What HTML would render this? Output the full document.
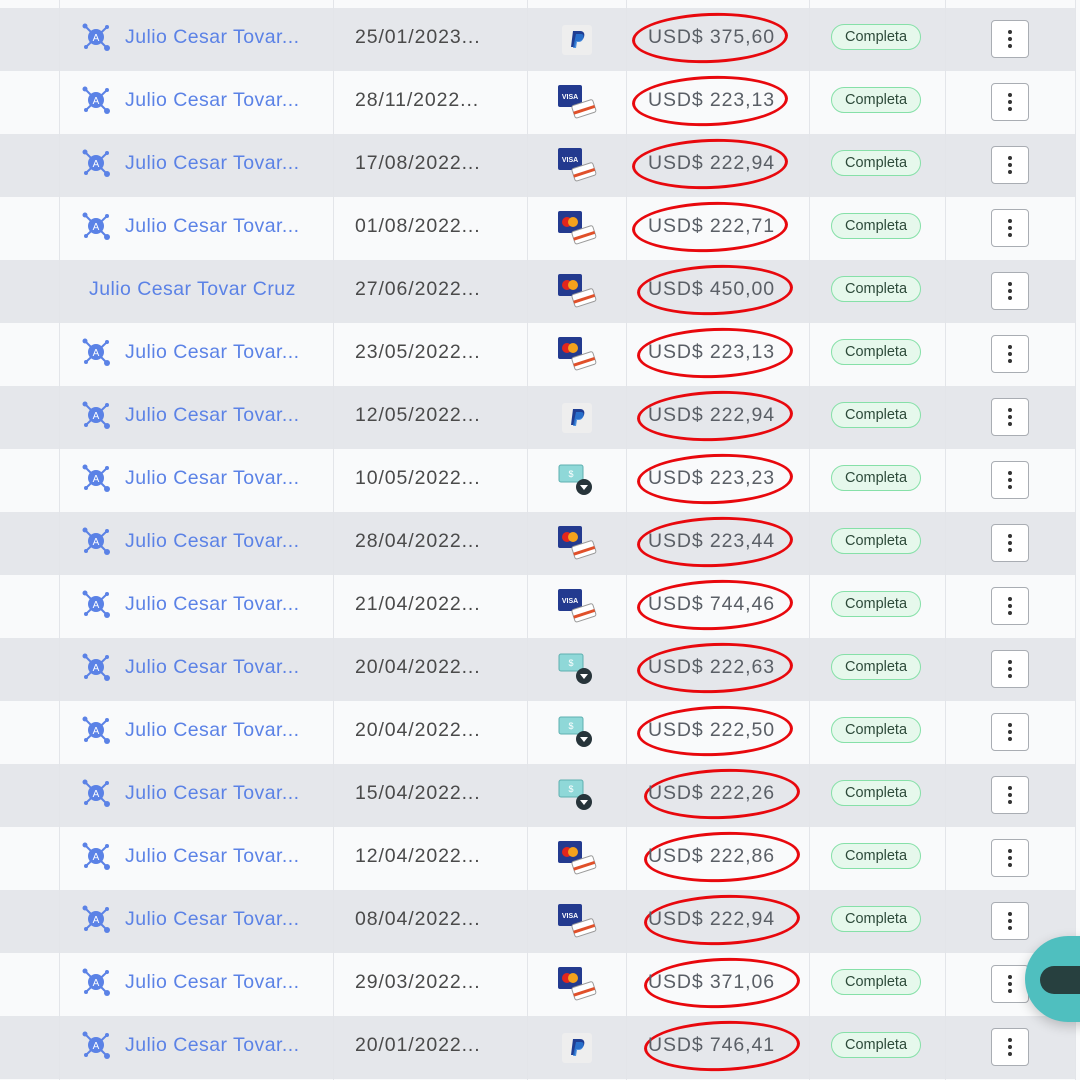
<!DOCTYPE html><html><head><meta charset="utf-8"><style>
body{margin:0;width:1080px;height:1080px;overflow:hidden;background:#f9fafb;font-family:"Liberation Sans",sans-serif;position:relative}
.r{position:absolute;left:0;width:1075px;height:63px}
.g{background:#e5e7eb}.w{background:#f9fafb}
.v{position:absolute;top:0;width:1px;height:1080px;background:#e3e5e9;z-index:1}
.n{position:absolute;left:125px;top:18px;font-size:19.5px;color:#5b82e6;letter-spacing:.45px}
.ni{position:absolute;left:81px;top:14px}
.d{position:absolute;left:355px;top:18px;font-size:19.5px;color:#4a4a4a;letter-spacing:.9px}
.p{position:absolute;left:558px;top:14px}
.a{position:absolute;left:648px;top:18px;font-size:19.5px;color:#5a5f66;z-index:3;letter-spacing:.9px}
.e{position:absolute;top:5px;width:150px;height:44px;border:3px solid #e8080d;border-radius:50%;transform:rotate(-2deg);z-index:2}
.b{position:absolute;left:831px;top:16px;width:88px;height:24px;border:1.5px solid #86e0a8;background:#e6f8ec;border-radius:13px;font-size:14.5px;color:#2d4a3a;text-align:center;line-height:24px}
.k{position:absolute;left:991px;top:12px;width:36px;height:36px;border:1.5px solid #a9adb3;background:#fff;border-radius:4px}
.k i{position:absolute;left:16px;width:4px;height:4px;border-radius:2px;background:#333}
</style></head><body>
<svg width="0" height="0" style="position:absolute"><defs>
<symbol id="ni" viewBox="0 0 30 30"><g stroke="#5b82e6" stroke-width="2"><line x1="4" y1="4" x2="26" y2="26"/><line x1="26" y1="5" x2="6" y2="24"/></g><circle cx="15" cy="15" r="8" fill="#5b82e6"/><circle cx="4" cy="4" r="2.5" fill="#5b82e6"/><circle cx="26" cy="5" r="2" fill="#5b82e6"/><circle cx="5" cy="25" r="2" fill="#5b82e6"/><circle cx="26" cy="26" r="3" fill="#5b82e6"/><text x="15" y="19" font-size="10" fill="#fff" text-anchor="middle" font-family="Liberation Sans">A</text></symbol>
<symbol id="pp" viewBox="0 0 34 34"><rect x="3" y="3" width="30" height="30" rx="3" fill="#eeeeee"/><path d="M14 9h7c4 0 5 3 4 6s-3 4-6 4h-2l-1 6h-4z" fill="#1f3d92"/><path d="M17 12h5c3 0 3 3 2 5s-2 3-5 3h-1l-1 6h-3z" fill="#2a7ad8" opacity=".8"/></symbol>
<symbol id="vi" viewBox="0 0 40 36"><rect x="0" y="0" width="24" height="22" rx="2" fill="#233a8f"/><text x="12" y="14" font-size="7" fill="#fff" text-anchor="middle" font-weight="bold" font-family="Liberation Sans">VISA</text><g transform="rotate(-18 27 24)"><rect x="15" y="17" width="22" height="13" rx="2" fill="#fff" stroke="#999"/><rect x="15" y="23" width="22" height="3" fill="#e0502a"/></g></symbol>
<symbol id="mc" viewBox="0 0 40 36"><rect x="0" y="0" width="24" height="22" rx="2" fill="#233a8f"/><circle cx="9" cy="11" r="5" fill="#e3261c"/><circle cx="15" cy="11" r="5" fill="#f4a21c"/><g transform="rotate(-18 27 24)"><rect x="15" y="17" width="22" height="13" rx="2" fill="#fff" stroke="#999"/><rect x="15" y="23" width="22" height="3" fill="#e0502a"/></g></symbol>
<symbol id="ca" viewBox="0 0 40 36"><rect x="1" y="2" width="24" height="17" rx="2" fill="#8fd8d8" stroke="#5fb0b0"/><text x="13" y="14" font-size="9" fill="#fff" text-anchor="middle" font-family="Liberation Sans">$</text><circle cx="26" cy="24" r="8" fill="#27343a"/><path d="M22 22h8l-4 5z" fill="#fff"/></symbol>
</defs></svg>
<div class="v" style="left:59px"></div><div class="v" style="left:333px"></div><div class="v" style="left:527px"></div><div class="v" style="left:626px"></div><div class="v" style="left:809px"></div><div class="v" style="left:945px"></div><div class="v" style="left:1075px"></div>

<div class="r g" style="top:8px"><svg class="ni" width="30" height="30"><use href="#ni"/></svg><div class="n">Julio Cesar Tovar...</div><div class="d">25/01/2023...</div><svg class="p" width="36" height="34"><use href="#pp"/></svg><div class="e" style="left:632px"></div><div class="a">USD$ 375,60</div><div class="b">Completa</div><div class="k"><i style="top:9px"></i><i style="top:16px"></i><i style="top:23px"></i></div></div>
<div class="r w" style="top:71px"><svg class="ni" width="30" height="30"><use href="#ni"/></svg><div class="n">Julio Cesar Tovar...</div><div class="d">28/11/2022...</div><svg class="p" width="40" height="36"><use href="#vi"/></svg><div class="e" style="left:632px"></div><div class="a">USD$ 223,13</div><div class="b">Completa</div><div class="k"><i style="top:9px"></i><i style="top:16px"></i><i style="top:23px"></i></div></div>
<div class="r g" style="top:134px"><svg class="ni" width="30" height="30"><use href="#ni"/></svg><div class="n">Julio Cesar Tovar...</div><div class="d">17/08/2022...</div><svg class="p" width="40" height="36"><use href="#vi"/></svg><div class="e" style="left:632px"></div><div class="a">USD$ 222,94</div><div class="b">Completa</div><div class="k"><i style="top:9px"></i><i style="top:16px"></i><i style="top:23px"></i></div></div>
<div class="r w" style="top:197px"><svg class="ni" width="30" height="30"><use href="#ni"/></svg><div class="n">Julio Cesar Tovar...</div><div class="d">01/08/2022...</div><svg class="p" width="40" height="36"><use href="#mc"/></svg><div class="e" style="left:632px"></div><div class="a">USD$ 222,71</div><div class="b">Completa</div><div class="k"><i style="top:9px"></i><i style="top:16px"></i><i style="top:23px"></i></div></div>
<div class="r g" style="top:260px"><div class="n" style="left:89px">Julio Cesar Tovar Cruz</div><div class="d">27/06/2022...</div><svg class="p" width="40" height="36"><use href="#mc"/></svg><div class="e" style="left:637px"></div><div class="a">USD$ 450,00</div><div class="b">Completa</div><div class="k"><i style="top:9px"></i><i style="top:16px"></i><i style="top:23px"></i></div></div>
<div class="r w" style="top:323px"><svg class="ni" width="30" height="30"><use href="#ni"/></svg><div class="n">Julio Cesar Tovar...</div><div class="d">23/05/2022...</div><svg class="p" width="40" height="36"><use href="#mc"/></svg><div class="e" style="left:637px"></div><div class="a">USD$ 223,13</div><div class="b">Completa</div><div class="k"><i style="top:9px"></i><i style="top:16px"></i><i style="top:23px"></i></div></div>
<div class="r g" style="top:386px"><svg class="ni" width="30" height="30"><use href="#ni"/></svg><div class="n">Julio Cesar Tovar...</div><div class="d">12/05/2022...</div><svg class="p" width="36" height="34"><use href="#pp"/></svg><div class="e" style="left:637px"></div><div class="a">USD$ 222,94</div><div class="b">Completa</div><div class="k"><i style="top:9px"></i><i style="top:16px"></i><i style="top:23px"></i></div></div>
<div class="r w" style="top:449px"><svg class="ni" width="30" height="30"><use href="#ni"/></svg><div class="n">Julio Cesar Tovar...</div><div class="d">10/05/2022...</div><svg class="p" width="40" height="36"><use href="#ca"/></svg><div class="e" style="left:637px"></div><div class="a">USD$ 223,23</div><div class="b">Completa</div><div class="k"><i style="top:9px"></i><i style="top:16px"></i><i style="top:23px"></i></div></div>
<div class="r g" style="top:512px"><svg class="ni" width="30" height="30"><use href="#ni"/></svg><div class="n">Julio Cesar Tovar...</div><div class="d">28/04/2022...</div><svg class="p" width="40" height="36"><use href="#mc"/></svg><div class="e" style="left:637px"></div><div class="a">USD$ 223,44</div><div class="b">Completa</div><div class="k"><i style="top:9px"></i><i style="top:16px"></i><i style="top:23px"></i></div></div>
<div class="r w" style="top:575px"><svg class="ni" width="30" height="30"><use href="#ni"/></svg><div class="n">Julio Cesar Tovar...</div><div class="d">21/04/2022...</div><svg class="p" width="40" height="36"><use href="#vi"/></svg><div class="e" style="left:637px"></div><div class="a">USD$ 744,46</div><div class="b">Completa</div><div class="k"><i style="top:9px"></i><i style="top:16px"></i><i style="top:23px"></i></div></div>
<div class="r g" style="top:638px"><svg class="ni" width="30" height="30"><use href="#ni"/></svg><div class="n">Julio Cesar Tovar...</div><div class="d">20/04/2022...</div><svg class="p" width="40" height="36"><use href="#ca"/></svg><div class="e" style="left:637px"></div><div class="a">USD$ 222,63</div><div class="b">Completa</div><div class="k"><i style="top:9px"></i><i style="top:16px"></i><i style="top:23px"></i></div></div>
<div class="r w" style="top:701px"><svg class="ni" width="30" height="30"><use href="#ni"/></svg><div class="n">Julio Cesar Tovar...</div><div class="d">20/04/2022...</div><svg class="p" width="40" height="36"><use href="#ca"/></svg><div class="e" style="left:637px"></div><div class="a">USD$ 222,50</div><div class="b">Completa</div><div class="k"><i style="top:9px"></i><i style="top:16px"></i><i style="top:23px"></i></div></div>
<div class="r g" style="top:764px"><svg class="ni" width="30" height="30"><use href="#ni"/></svg><div class="n">Julio Cesar Tovar...</div><div class="d">15/04/2022...</div><svg class="p" width="40" height="36"><use href="#ca"/></svg><div class="e" style="left:644px"></div><div class="a">USD$ 222,26</div><div class="b">Completa</div><div class="k"><i style="top:9px"></i><i style="top:16px"></i><i style="top:23px"></i></div></div>
<div class="r w" style="top:827px"><svg class="ni" width="30" height="30"><use href="#ni"/></svg><div class="n">Julio Cesar Tovar...</div><div class="d">12/04/2022...</div><svg class="p" width="40" height="36"><use href="#mc"/></svg><div class="e" style="left:644px"></div><div class="a">USD$ 222,86</div><div class="b">Completa</div><div class="k"><i style="top:9px"></i><i style="top:16px"></i><i style="top:23px"></i></div></div>
<div class="r g" style="top:890px"><svg class="ni" width="30" height="30"><use href="#ni"/></svg><div class="n">Julio Cesar Tovar...</div><div class="d">08/04/2022...</div><svg class="p" width="40" height="36"><use href="#vi"/></svg><div class="e" style="left:644px"></div><div class="a">USD$ 222,94</div><div class="b">Completa</div><div class="k"><i style="top:9px"></i><i style="top:16px"></i><i style="top:23px"></i></div></div>
<div class="r w" style="top:953px"><svg class="ni" width="30" height="30"><use href="#ni"/></svg><div class="n">Julio Cesar Tovar...</div><div class="d">29/03/2022...</div><svg class="p" width="40" height="36"><use href="#mc"/></svg><div class="e" style="left:644px"></div><div class="a">USD$ 371,06</div><div class="b">Completa</div><div class="k"><i style="top:9px"></i><i style="top:16px"></i><i style="top:23px"></i></div></div>
<div class="r g" style="top:1016px"><svg class="ni" width="30" height="30"><use href="#ni"/></svg><div class="n">Julio Cesar Tovar...</div><div class="d">20/01/2022...</div><svg class="p" width="36" height="34"><use href="#pp"/></svg><div class="e" style="left:644px"></div><div class="a">USD$ 746,41</div><div class="b">Completa</div><div class="k"><i style="top:9px"></i><i style="top:16px"></i><i style="top:23px"></i></div></div>

<div style="position:absolute;left:1025px;top:936px;width:100px;height:86px;border-radius:43px;background:#4fbfbf;z-index:5;box-shadow:0 4px 12px rgba(0,0,0,.2)"></div>
<div style="position:absolute;left:1040px;top:966px;width:60px;height:28px;border-radius:14px;background:#27403f;z-index:6"></div>
</body></html>
